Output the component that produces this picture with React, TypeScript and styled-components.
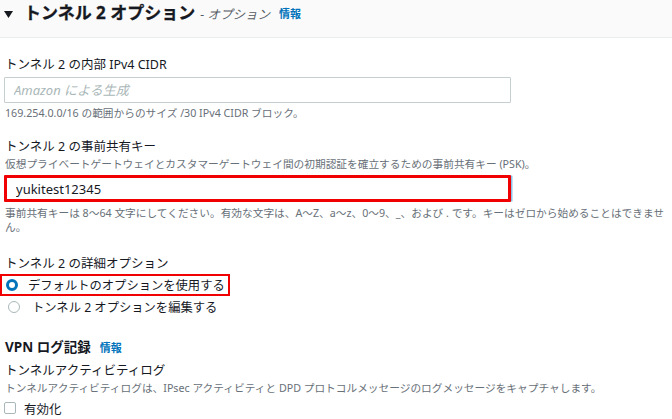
import React from "react";
import styled, {createGlobalStyle} from "styled-components";

const GlobalStyle = createGlobalStyle`
    html, body {
        margin: 0;
        padding: 0;
        background: #ffffff;
        overflow: hidden;
    }
    body {
        font-family: "Noto Sans", "Noto Sans CJK JP", sans-serif;
        color: #16191f;
    }
`;

const Header = styled.div`
    height: 38px;
    box-sizing: border-box;
    padding: 2px 0 0 4px;
    background: #fafafa;
    border-bottom: 1px solid #eaeded;
`;

const TitleRow = styled.div`
    display: flex;
    align-items: center;
    height: 22px;
`;

const Caret = styled.svg`
    width: 9px;
    height: 7px;
    margin: 2px 11px 0 0;
`;

const Title = styled.h2`
    margin: 0;
    font-size: 17px;
    font-weight: 700;
    line-height: 22px;
    -webkit-text-stroke: 0.3px #16191f;
`;

const TitleSub = styled.span`
    margin-left: 5px;
    font-size: 12.5px;
    font-style: italic;
    color: #545b64;
`;

const Info = styled.a`
    margin-left: 9px;
    font-size: 11px;
    font-weight: 700;
    color: #0073bb;
    text-decoration: none;
`;

const Body = styled.div`
    padding: 18px 0 0 4px;
`;

const Field = styled.div<{$gap?: number}>`
    margin-top: ${p => p.$gap ?? 0}px;
`;

const Label = styled.div`
    font-size: 12.5px;
    line-height: 18px;
    padding-left: 1px;
`;

const Description = styled.div`
    font-size: 10.7px;
    line-height: 16px;
    color: #687078;
    padding-left: 1px;
    white-space: nowrap;
`;

const Hint = styled.div<{$top?: number}>`
    margin-top: ${p => p.$top ?? 3}px;
    font-size: 10.7px;
    line-height: 14px;
    color: #687078;
    padding-left: 1px;
    white-space: nowrap;
`;

const Input = styled.input<{$highlight?: boolean}>`
    display: block;
    box-sizing: border-box;
    width: 507px;
    height: ${p => (p.$highlight ? 27 : 26)}px;
    margin-top: ${p => (p.$highlight ? 3 : 3)}px;
    padding: 0 9px;
    font-family: "Noto Sans", "Noto Sans CJK JP", sans-serif;
    font-size: 13px;
    color: #16191f;
    border: ${p => (p.$highlight ? "3px solid #f00000" : "1px solid #c6cfd0")};
    box-shadow: ${p => (p.$highlight ? "2px 0 0 -0.5px #8fc3e6" : "none")};
    border-radius: 1px;
    outline: none;
    background: #ffffff;

    &::placeholder {
        color: #aab7b8;
        font-style: italic;
    }
`;

const RadioGroup = styled.div`
    margin-top: 1px;
    margin-left: -4px;
`;

const RadioRow = styled.label<{$highlight?: boolean}>`
    display: flex;
    align-items: center;
    box-sizing: border-box;
    width: fit-content;
    height: 22px;
    padding: 0 ${p => (p.$highlight ? 3 : 5)}px 0 ${p => (p.$highlight ? 2 : 4)}px;
    border: ${p => (p.$highlight ? "2px solid #f00000" : "none")};
    font-size: 12.3px;
    cursor: pointer;
`;

const RadioDot = styled.span<{$checked?: boolean}>`
    box-sizing: border-box;
    width: 12px;
    height: 12px;
    border-radius: 50%;
    margin: 0 ${p => (p.$checked ? 10 : 12)}px 0 ${p => (p.$checked ? 2 : 4)}px;
    background: #ffffff;
    border: ${p => (p.$checked ? "3.5px solid #0073bb" : "1px solid #aab7b8")};
`;

const SectionTitle = styled.div`
    display: flex;
    align-items: baseline;
    margin-top: 19px;
    font-size: 13.5px;
    font-weight: 700;
    line-height: 20px;
    padding-left: 1px;
`;

const CheckRow = styled.label`
    display: flex;
    align-items: center;
    height: 22px;
    margin-top: 1px;
    font-size: 12.5px;
`;

const CheckBox = styled.span`
    box-sizing: border-box;
    width: 12px;
    height: 12px;
    margin: 0 8px 0 0;
    border: 1px solid #aab7b8;
    border-radius: 2px;
    background: #ffffff;
`;

export default function App() {
    return (
        <>
            <GlobalStyle />
            <Header>
                <TitleRow>
                    <Caret viewBox="0 0 9 7">
                        <path d="M0 0 H9 L4.5 7 Z" fill="#16191f" />
                    </Caret>
                    <Title>トンネル 2 オプション</Title>
                    <TitleSub>- オプション</TitleSub>
                    <Info href="#">情報</Info>
                </TitleRow>
            </Header>
            <Body>
                <Field>
                    <Label>トンネル 2 の内部 IPv4 CIDR</Label>
                    <Input placeholder="Amazon による生成" readOnly />
                    <Hint>169.254.0.0/16 の範囲からのサイズ /30 IPv4 CIDR ブロック。</Hint>
                </Field>
                <Field $gap={18}>
                    <Label>トンネル 2 の事前共有キー</Label>
                    <Description>
                        仮想プライベートゲートウェイとカスタマーゲートウェイ間の初期認証を確立するための事前共有キー (PSK)。
                    </Description>
                    <Input $highlight defaultValue="yukitest12345" />
                    <Hint $top={4}>
                        事前共有キーは 8〜64 文字にしてください。有効な文字は、A〜Z、a〜z、0〜9、_、および . です。キーはゼロから始めることはできませ
                        <br />
                        ん。
                    </Hint>
                </Field>
                <Field $gap={21}>
                    <Label>トンネル 2 の詳細オプション</Label>
                    <RadioGroup>
                        <RadioRow $highlight>
                            <RadioDot $checked />
                            デフォルトのオプションを使用する
                        </RadioRow>
                        <RadioRow>
                            <RadioDot />
                            トンネル 2 オプションを編集する
                        </RadioRow>
                    </RadioGroup>
                </Field>
                <SectionTitle>
                    VPN ログ記録
                    <Info href="#">情報</Info>
                </SectionTitle>
                <Field $gap={4}>
                    <Label>トンネルアクティビティログ</Label>
                    <Description>
                        トンネルアクティビティログは、IPsec アクティビティと DPD プロトコルメッセージのログメッセージをキャプチャします。
                    </Description>
                    <CheckRow>
                        <CheckBox />
                        有効化
                    </CheckRow>
                </Field>
            </Body>
        </>
    );
}
